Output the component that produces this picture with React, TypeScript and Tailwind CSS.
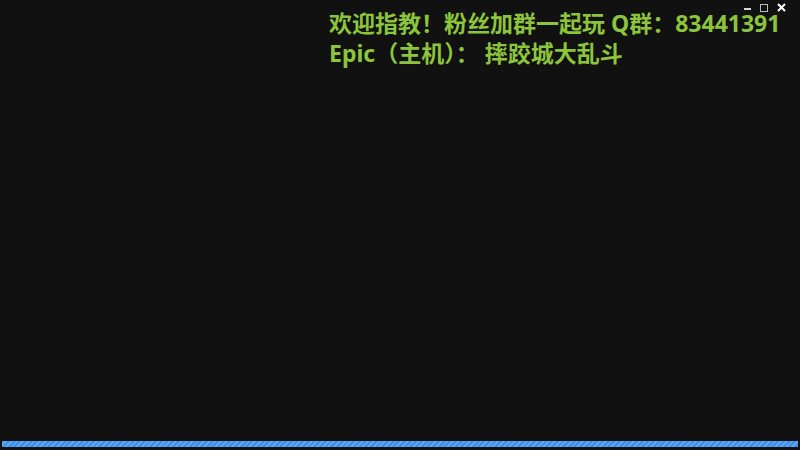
import React from 'react';

const App = () => {
    return (
        <div className="relative h-[450px] w-[800px] overflow-hidden bg-[#111111] flex flex-col">
            {/* window controls */}
            <div className="absolute right-[14px] top-[3px] flex items-center gap-[9px] text-[#e8e8e8]">
                <div className="h-[2px] w-[7px] bg-[#d8d8d8] mt-[3px]"></div>
                <div className="h-[8px] w-[8px] border border-[#bbbbbb]"></div>
                <svg width="9" height="9" viewBox="0 0 9 9">
                    <path d="M1 1 L8 8 M8 1 L1 8" stroke="#ffffff" strokeWidth="2" />
                </svg>
            </div>

            {/* overlay text */}
            <div
                className="ml-[329px] mt-[8px] flex flex-col text-[23px] font-bold leading-[30px] text-[#8cc43c]"
                style={{ fontFamily: '"Noto Sans", "Noto Sans CJK SC", sans-serif' }}
            >
                <div className="whitespace-nowrap">欢迎指教！粉丝加群一起玩 Q群：83441391</div>
                <div className="whitespace-nowrap">Epic（主机）： 摔跤城大乱斗</div>
            </div>

            <div className="flex-1"></div>

            {/* progress bar */}
            <div className="mx-[2px] mb-[3px] h-[6px] bg-[repeating-linear-gradient(135deg,#3c8ee8_0px,#3c8ee8_2px,#5aa8f4_2px,#5aa8f4_4px)]"></div>
        </div>
    );
};

export default App;
